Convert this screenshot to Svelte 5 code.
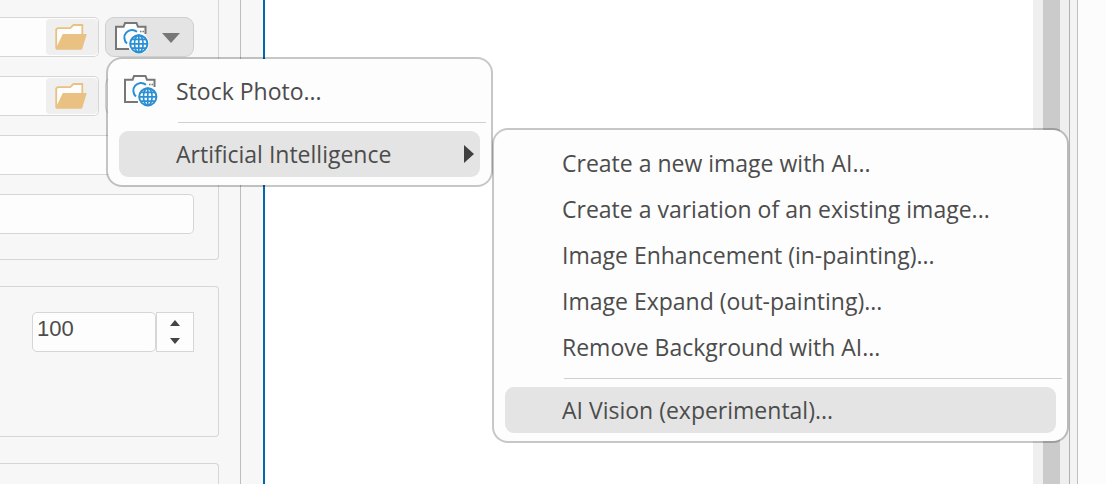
<script lang="ts">
  let menuOpen = $state(true);
  let submenuOpen = $state(true);
  let amount = $state(100);
  let active = $state("AI Vision (experimental)...");

  const aiActions = [
    "Create a new image with AI...",
    "Create a variation of an existing image...",
    "Image Enhancement (in-painting)...",
    "Image Expand (out-painting)...",
    "Remove Background with AI...",
  ];
  const visionAction = "AI Vision (experimental)...";
</script>

{#snippet cameraIcon()}
  <svg class="camera" width="34" height="33" viewBox="0 0 34 33" fill="none" aria-hidden="true">
    <path d="M1 4.8H8.6L10 1H21.5L23 4.8H30.5V27H1Z" fill="#fdfdfd" />
    <path d="M14 27H1V4.8H8.6L10 1H21.5L23 4.8H30.5V12" stroke="#777" stroke-width="2" />
    <path d="M25 9.5H26.5M27.5 9.5H29" stroke="#777" stroke-width="1.6" />
    <path d="M22 9.8A7.6 7.6 0 1 0 12 21.4" stroke="#2b8fd3" stroke-width="2" />
    <circle cx="23.8" cy="21.8" r="10.3" fill="#fdfdfd" />
    <circle cx="23.8" cy="21.8" r="8.6" fill="#fdfdfd" stroke="#2b8fd3" stroke-width="2" />
    <ellipse cx="23.8" cy="21.8" rx="4.3" ry="8.6" stroke="#2b8fd3" stroke-width="1.7" />
    <path d="M23.8 13V30.5M15 21.8H32.6M16.4 17.4H31.2M16.4 26.2H31.2" stroke="#2b8fd3" stroke-width="1.7" />
  </svg>
{/snippet}

{#snippet folderIcon()}
  <svg width="32" height="26" viewBox="0 0 32 26" aria-hidden="true">
    <path d="M1.2 24.5V5.5L2.6 4.2H15.2L18.4 1H27.3V11" fill="#fdfdfd" stroke="#e9c283" stroke-width="1.8" />
    <path d="M7.8 10H31.8L27.4 24.6Q27 25.8 25.8 25.8H1.6Q.4 25.8 .8 24.6Z" fill="#e9c283" />
  </svg>
{/snippet}

<div class="window">
  <aside class="sidebar">
    <div class="settings">
      <section class="group first">
        <div class="row">
          <div class="field">
            <input type="text" aria-label="Image file" />
            <button class="browse" aria-label="Browse image">{@render folderIcon()}</button>
          </div>
          <div class="dropdown">
            <button class="camera-btn" aria-label="Insert image" onclick={() => (menuOpen = !menuOpen)}>
              {@render cameraIcon()}
              <svg width="18" height="10" viewBox="0 0 18 10" aria-hidden="true"><path d="M0 0H18L9 10Z" fill="#777" /></svg>
            </button>
            {#if menuOpen}
              <ul class="menu main-menu" role="menu">
                <li role="none">
                  <button class="item" role="menuitem">
                    <span class="item-icon">{@render cameraIcon()}</span>
                    Stock Photo...
                  </button>
                </li>
                <li class="separator" role="separator"></li>
                <li class="parent" role="none">
                  <button class="item active" role="menuitem" onclick={() => (submenuOpen = !submenuOpen)}>
                    Artificial Intelligence
                    <svg class="arrow" width="10" height="18" viewBox="0 0 10 18" aria-hidden="true"><path d="M0 0L10 9L0 18Z" fill="#404040" /></svg>
                  </button>
                  {#if submenuOpen}
                    <ul class="menu submenu" role="menu">
                      {#each aiActions as action}
                        <li role="none">
                          <button class="item" class:active={active === action} role="menuitem" onmouseenter={() => (active = action)}>{action}</button>
                        </li>
                      {/each}
                      <li class="separator" role="separator"></li>
                      <li role="none">
                        <button class="item" class:active={active === visionAction} role="menuitem" onmouseenter={() => (active = visionAction)}>{visionAction}</button>
                      </li>
                    </ul>
                  {/if}
                </li>
              </ul>
            {/if}
          </div>
        </div>
        <div class="row">
          <div class="field">
            <input type="text" aria-label="Hover image file" />
            <button class="browse" aria-label="Browse hover image">{@render folderIcon()}</button>
          </div>
          <button class="camera-btn plain" aria-label="Insert hover image"></button>
        </div>
        <div class="field"><input type="text" aria-label="Title" /></div>
        <div class="field"><input type="text" aria-label="Description" /></div>
      </section>

      <section class="group second">
        <div class="stepper">
          <input class="amount" type="text" inputmode="numeric" aria-label="Amount" bind:value={amount} />
          <div class="spin">
            <button aria-label="Increase" onclick={() => (amount = Number(amount) + 1)}>
              <svg width="10" height="6" viewBox="0 0 10 6" aria-hidden="true"><path d="M0 6L5 0L10 6Z" fill="#444" /></svg>
            </button>
            <button aria-label="Decrease" onclick={() => (amount = Number(amount) - 1)}>
              <svg width="10" height="6" viewBox="0 0 10 6" aria-hidden="true"><path d="M0 0H10L5 6Z" fill="#444" /></svg>
            </button>
          </div>
        </div>
      </section>

      <section class="group last"></section>
    </div>
  </aside>

  <main class="canvas"></main>
  <div class="scrollbar"><div class="thumb"></div></div>
  <div class="splitter"></div>
  <div class="right-panel"></div>
</div>

<style>
  .window {
    display: flex;
    min-height: 100vh;
    background: #fff;
    color: #4c4c4c;
    font-family: "Open Sans", "Segoe UI", "Noto Sans", sans-serif;
    font-size: 23px;
  }

  .window :is(button, input) {
    box-sizing: border-box;
    font: inherit;
    color: inherit;
    margin: 0;
  }

  .sidebar {
    display: flex;
    box-sizing: border-box;
    width: 265px;
    flex: none;
    padding-right: 22px;
    background: #f7f7f7;
    border-right: 2px solid #0067b0;
  }

  .settings {
    flex: 1;
    display: flex;
    flex-direction: column;
    gap: 26px;
    min-width: 0;
    padding-right: 21px;
    border-right: 1px solid #bdbdbd;
  }

  .group {
    display: flex;
    flex-direction: column;
    gap: 19px;
    padding: 25px 24px 25px 0;
    border: 1px solid #d6d6d6;
    border-left: none;
    border-radius: 0 4px 4px 0;
  }

  .first {
    padding-top: 17px;
    border-top: none;
    border-top-right-radius: 0;
  }

  .second {
    padding-bottom: 84px;
  }

  .last {
    flex: 1;
    padding: 0;
    border-bottom: none;
    border-bottom-right-radius: 0;
  }

  .row {
    display: flex;
    gap: 6px;
  }

  .field {
    display: flex;
    flex: 1 0 40px;
    box-sizing: border-box;
    min-width: 0;
    height: 40px;
    background: #fdfdfd;
    border: 1px solid #d6d6d6;
    border-left: none;
    border-radius: 0 5px 5px 0;
  }

  .field input {
    flex: 1;
    width: 0;
    min-width: 0;
    padding: 0;
    border: none;
    background: none;
    outline: none;
  }

  .browse {
    display: flex;
    align-items: center;
    justify-content: center;
    flex: none;
    width: 53px;
    padding: 0 2px 1px 0;
    border: 1px solid #fdfdfd;
    border-right: none;
    border-radius: 5px;
    background: #efefef;
  }

  .dropdown {
    position: relative;
  }

  .camera-btn {
    display: flex;
    align-items: center;
    gap: 13px;
    width: 89px;
    height: 40px;
    padding: 2px 0 0 9px;
    background: #e4e4e4;
    border: 1px solid #cfcfcf;
    border-radius: 9px;
  }

  .plain {
    background: #f7f7f7;
  }

  .menu {
    position: absolute;
    z-index: 1;
    box-sizing: border-box;
    margin: 0;
    padding: 9px 11px 8px;
    list-style: none;
    background: #fdfdfd;
    background-clip: padding-box;
    border: 2px solid rgba(0, 0, 0, 0.22);
    border-radius: 16px;
  }

  .main-menu {
    top: 100%;
    left: 1px;
    width: 387px;
  }

  .parent {
    position: relative;
  }

  .submenu {
    top: -3px;
    left: calc(100% + 12px);
    width: 577px;
    padding-top: 10px;
  }

  .item {
    display: flex;
    align-items: center;
    position: relative;
    width: 100%;
    height: 46px;
    padding: 0 6px 0 57px;
    border: none;
    border-radius: 9px;
    background: none;
    text-align: left;
    white-space: nowrap;
  }

  .item.active {
    background: #e4e4e4;
  }

  .item-icon {
    display: flex;
    width: 52px;
    margin-left: -52px;
  }

  .arrow {
    margin-left: auto;
  }

  .separator {
    height: 1px;
    margin: 8px -6px 8px 59px;
    background: #d0d0d0;
  }

  .stepper {
    display: flex;
    height: 40px;
    padding-left: 32px;
  }

  .stepper .amount {
    flex: 1;
    width: 0;
    min-width: 0;
    padding: 0 4px 6px;
    border: 1px solid #d6d6d6;
    border-radius: 5px;
    background: #fdfdfd;
    font-family: "Liberation Sans", Arial, sans-serif;
    font-size: 22px;
    outline: none;
  }

  .spin {
    display: flex;
    flex-direction: column;
    justify-content: center;
    box-sizing: border-box;
    flex: none;
    width: 38px;
    border: 1px solid #d6d6d6;
    background: #fdfdfd;
  }

  .spin button {
    display: flex;
    align-items: center;
    justify-content: center;
    height: 18px;
    padding: 0;
    border: none;
    background: none;
  }

  .canvas {
    flex: 1;
  }

  .scrollbar {
    display: flex;
    justify-content: center;
    width: 36px;
    background: #efefef;
  }

  .thumb {
    width: 17px;
    background: #cbcbcb;
  }

  .splitter {
    width: 7px;
    background: #f3f3f3;
    border-left: 1px solid #b0b0b0;
    border-right: 1px solid #c0c0c0;
  }

  .right-panel {
    width: 28px;
    background: #fcfcfc;
  }
</style>
